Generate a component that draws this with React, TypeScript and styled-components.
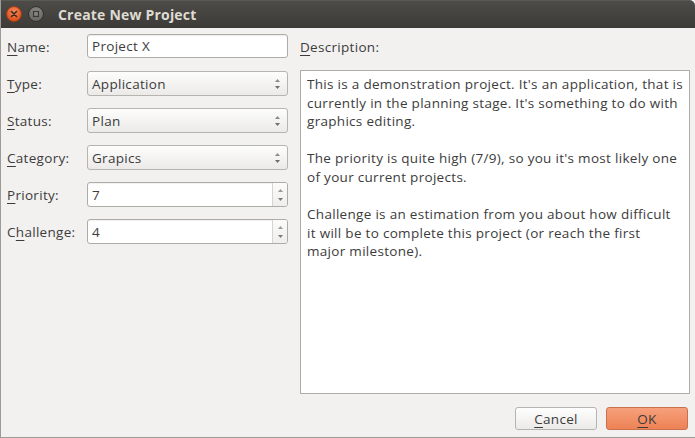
import React from "react";
import styled, { createGlobalStyle } from "styled-components";

const GlobalStyle = createGlobalStyle`
  html, body {
    margin: 0;
    padding: 0;
    background: #f2f1f0;
  }
  body {
    font-family: "Open Sans", "Noto Sans", "DejaVu Sans", sans-serif;
    font-size: 13.5px;
    letter-spacing: 0.3px;
    color: #3c3c3c;
  }
`;

const Window = styled.div`
  width: 695px;
  height: 438px;
  box-sizing: border-box;
  display: flex;
  flex-direction: column;
  background: #f2f1f0;
  border-left: 1px solid #9d9b96;
  border-bottom: 1px solid #9d9b96;
  overflow: hidden;
`;

const TitleBar = styled.div`
  height: 28px;
  flex: 0 0 28px;
  display: flex;
  align-items: center;
  padding-left: 5px;
  background: linear-gradient(#4d4c48, #3c3b37);
  border-top-right-radius: 6px;
  box-shadow: inset 0 1px 0 #5a5954;
`;

const WinButton = styled.div<{ $kind: "close" | "min" }>`
  width: 16px;
  height: 16px;
  border-radius: 50%;
  margin-right: 6px;
  display: flex;
  align-items: center;
  justify-content: center;
  box-sizing: border-box;
  border: 1px solid ${({ $kind }) => ($kind === "close" ? "#a33d16" : "#33322f")};
  background: ${({ $kind }) =>
    $kind === "close"
      ? "radial-gradient(circle at 50% 35%, #f68b5c, #e0541f 70%)"
      : "radial-gradient(circle at 50% 35%, #8f8d88, #6a6964 70%)"};
`;

const Title = styled.div`
  margin-left: 8px;
  font-family: "Open Sans", "Noto Sans", sans-serif;
  font-weight: 700;
  font-size: 14px;
  color: #dfdbd2;
  letter-spacing: 0.2px;
`;

const Body = styled.div`
  flex: 1;
  display: flex;
  gap: 12px;
  padding: 6px 7px 0 6px;
`;

const Form = styled.div`
  display: grid;
  grid-template-columns: 80px 201px;
  grid-auto-rows: 25px;
  row-gap: 12px;
  align-items: center;
`;

const Label = styled.div`
  white-space: nowrap;
`;

const Key = styled.span`
  text-decoration: underline;
  text-underline-offset: 3px;
  text-decoration-thickness: 1px;
`;

const TextInput = styled.div`
  height: 24px;
  align-self: start;
  box-sizing: border-box;
  border: 1px solid #aeaca7;
  border-radius: 3px;
  background: #ffffff;
  box-shadow: inset 0 1px 1px rgba(0, 0, 0, 0.08);
  display: flex;
  align-items: center;
  padding-left: 4px;
  color: #3c3c3c;
`;

const Combo = styled.div`
  height: 25px;
  box-sizing: border-box;
  border: 1px solid #b6b4af;
  border-radius: 3px;
  background: linear-gradient(#fdfdfc, #ebeae8);
  display: flex;
  align-items: center;
  padding-left: 4px;
  padding-right: 7px;
`;

const Spin = styled.div`
  height: 25px;
  box-sizing: border-box;
  border: 1px solid #aeaca7;
  border-radius: 3px;
  background: #ffffff;
  box-shadow: inset 0 1px 1px rgba(0, 0, 0, 0.06);
  display: flex;
  align-items: stretch;
  overflow: hidden;
`;

const SpinValue = styled.div`
  flex: 1;
  display: flex;
  align-items: center;
  padding-left: 4px;
`;

const SpinButtons = styled.div`
  width: 15px;
  border-left: 1px solid #d6d4d0;
  background: linear-gradient(#fbfbfa, #efeeec);
  display: flex;
  flex-direction: column;
  justify-content: space-between;
  align-items: center;
  padding: 6px 0 5px;
  box-sizing: border-box;
`;

const ComboValue = styled.div`
  flex: 1;
`;

const Arrows = styled.div`
  display: flex;
  flex-direction: column;
  gap: 4px;
  align-items: center;
`;

const Side = styled.div`
  flex: 1;
  display: flex;
  flex-direction: column;
`;

const SideLabel = styled.div`
  height: 25px;
  display: flex;
  align-items: center;
  margin-bottom: 11px;
`;

const TextArea = styled.div`
  height: 324px;
  box-sizing: border-box;
  border: 1px solid #aeaca7;
  background: #ffffff;
  padding: 4px 6px;
  line-height: 18.6px;
  white-space: pre;
  overflow: hidden;
  color: #3c3c3c;
`;

const Footer = styled.div`
  display: flex;
  justify-content: flex-end;
  gap: 9px;
  padding: 13px 7px 7px 0;
`;

const Button = styled.div<{ $primary?: boolean }>`
  width: 82px;
  height: 23px;
  box-sizing: border-box;
  border-radius: 3px;
  display: flex;
  align-items: center;
  justify-content: center;
  border: 1px solid ${({ $primary }) => ($primary ? "#c9704d" : "#b6b4af")};
  background: ${({ $primary }) =>
    $primary
      ? "linear-gradient(#f6a07b, #ee8256)"
      : "linear-gradient(#fefefe, #eceae8)"};
  color: #3c3c3c;
`;

const UpArrow = ({ color = "#6e6e6e" }: { color?: string }) => (
  <svg width="5" height="3" viewBox="0 0 5 3">
    <path d="M0 3 L2.5 0 L5 3 Z" fill={color} />
  </svg>
);

const DownArrow = ({ color = "#6e6e6e" }: { color?: string }) => (
  <svg width="5" height="3" viewBox="0 0 5 3">
    <path d="M0 0 L5 0 L2.5 3 Z" fill={color} />
  </svg>
);

const CloseGlyph = () => (
  <svg width="8" height="8" viewBox="0 0 8 8">
    <path d="M1.5 1.5 L6.5 6.5 M6.5 1.5 L1.5 6.5" stroke="#3b2a22" strokeWidth="1.6" strokeLinecap="round" />
  </svg>
);

const MinGlyph = () => (
  <svg width="8" height="8" viewBox="0 0 8 8">
    <rect x="1.5" y="1.5" width="5" height="5" fill="none" stroke="#3a3936" strokeWidth="1.2" />
  </svg>
);

const ComboBox = ({ value }: { value: string }) => (
  <Combo>
    <ComboValue>{value}</ComboValue>
    <Arrows>
      <UpArrow color="#8a8a8a" />
      <DownArrow />
    </Arrows>
  </Combo>
);

const SpinBox = ({ value }: { value: string }) => (
  <Spin>
    <SpinValue>{value}</SpinValue>
    <SpinButtons>
      <UpArrow color="#9a9a9a" />
      <DownArrow color="#7a7a7a" />
    </SpinButtons>
  </Spin>
);

const description = [
  "This is a demonstration project. It's an application, that is",
  "currently in the planning stage. It's something to do with",
  "graphics editing.",
  "",
  "The priority is quite high (7/9), so you it's most likely one",
  "of your current projects.",
  "",
  "Challenge is an estimation from you about how difficult",
  "it will be to complete this project (or reach the first",
  "major milestone).",
].join("\n");

export default function App() {
  return (
    <>
      <GlobalStyle />
      <Window>
        <TitleBar>
          <WinButton $kind="close">
            <CloseGlyph />
          </WinButton>
          <WinButton $kind="min">
            <MinGlyph />
          </WinButton>
          <Title>Create New Project</Title>
        </TitleBar>
        <Body>
          <Form>
            <Label>
              <Key>N</Key>ame:
            </Label>
            <TextInput>Project X</TextInput>
            <Label>
              <Key>T</Key>ype:
            </Label>
            <ComboBox value="Application" />
            <Label>
              <Key>S</Key>tatus:
            </Label>
            <ComboBox value="Plan" />
            <Label>
              <Key>C</Key>ategory:
            </Label>
            <ComboBox value="Grapics" />
            <Label>
              <Key>P</Key>riority:
            </Label>
            <SpinBox value="7" />
            <Label>
              C<Key>h</Key>allenge:
            </Label>
            <SpinBox value="4" />
          </Form>
          <Side>
            <SideLabel>
              <span>
                <Key>D</Key>escription:
              </span>
            </SideLabel>
            <TextArea>{description}</TextArea>
          </Side>
        </Body>
        <Footer>
          <Button>
            <span>
              <Key>C</Key>ancel
            </span>
          </Button>
          <Button $primary>
            <span>
              <Key>O</Key>K
            </span>
          </Button>
        </Footer>
      </Window>
    </>
  );
}
